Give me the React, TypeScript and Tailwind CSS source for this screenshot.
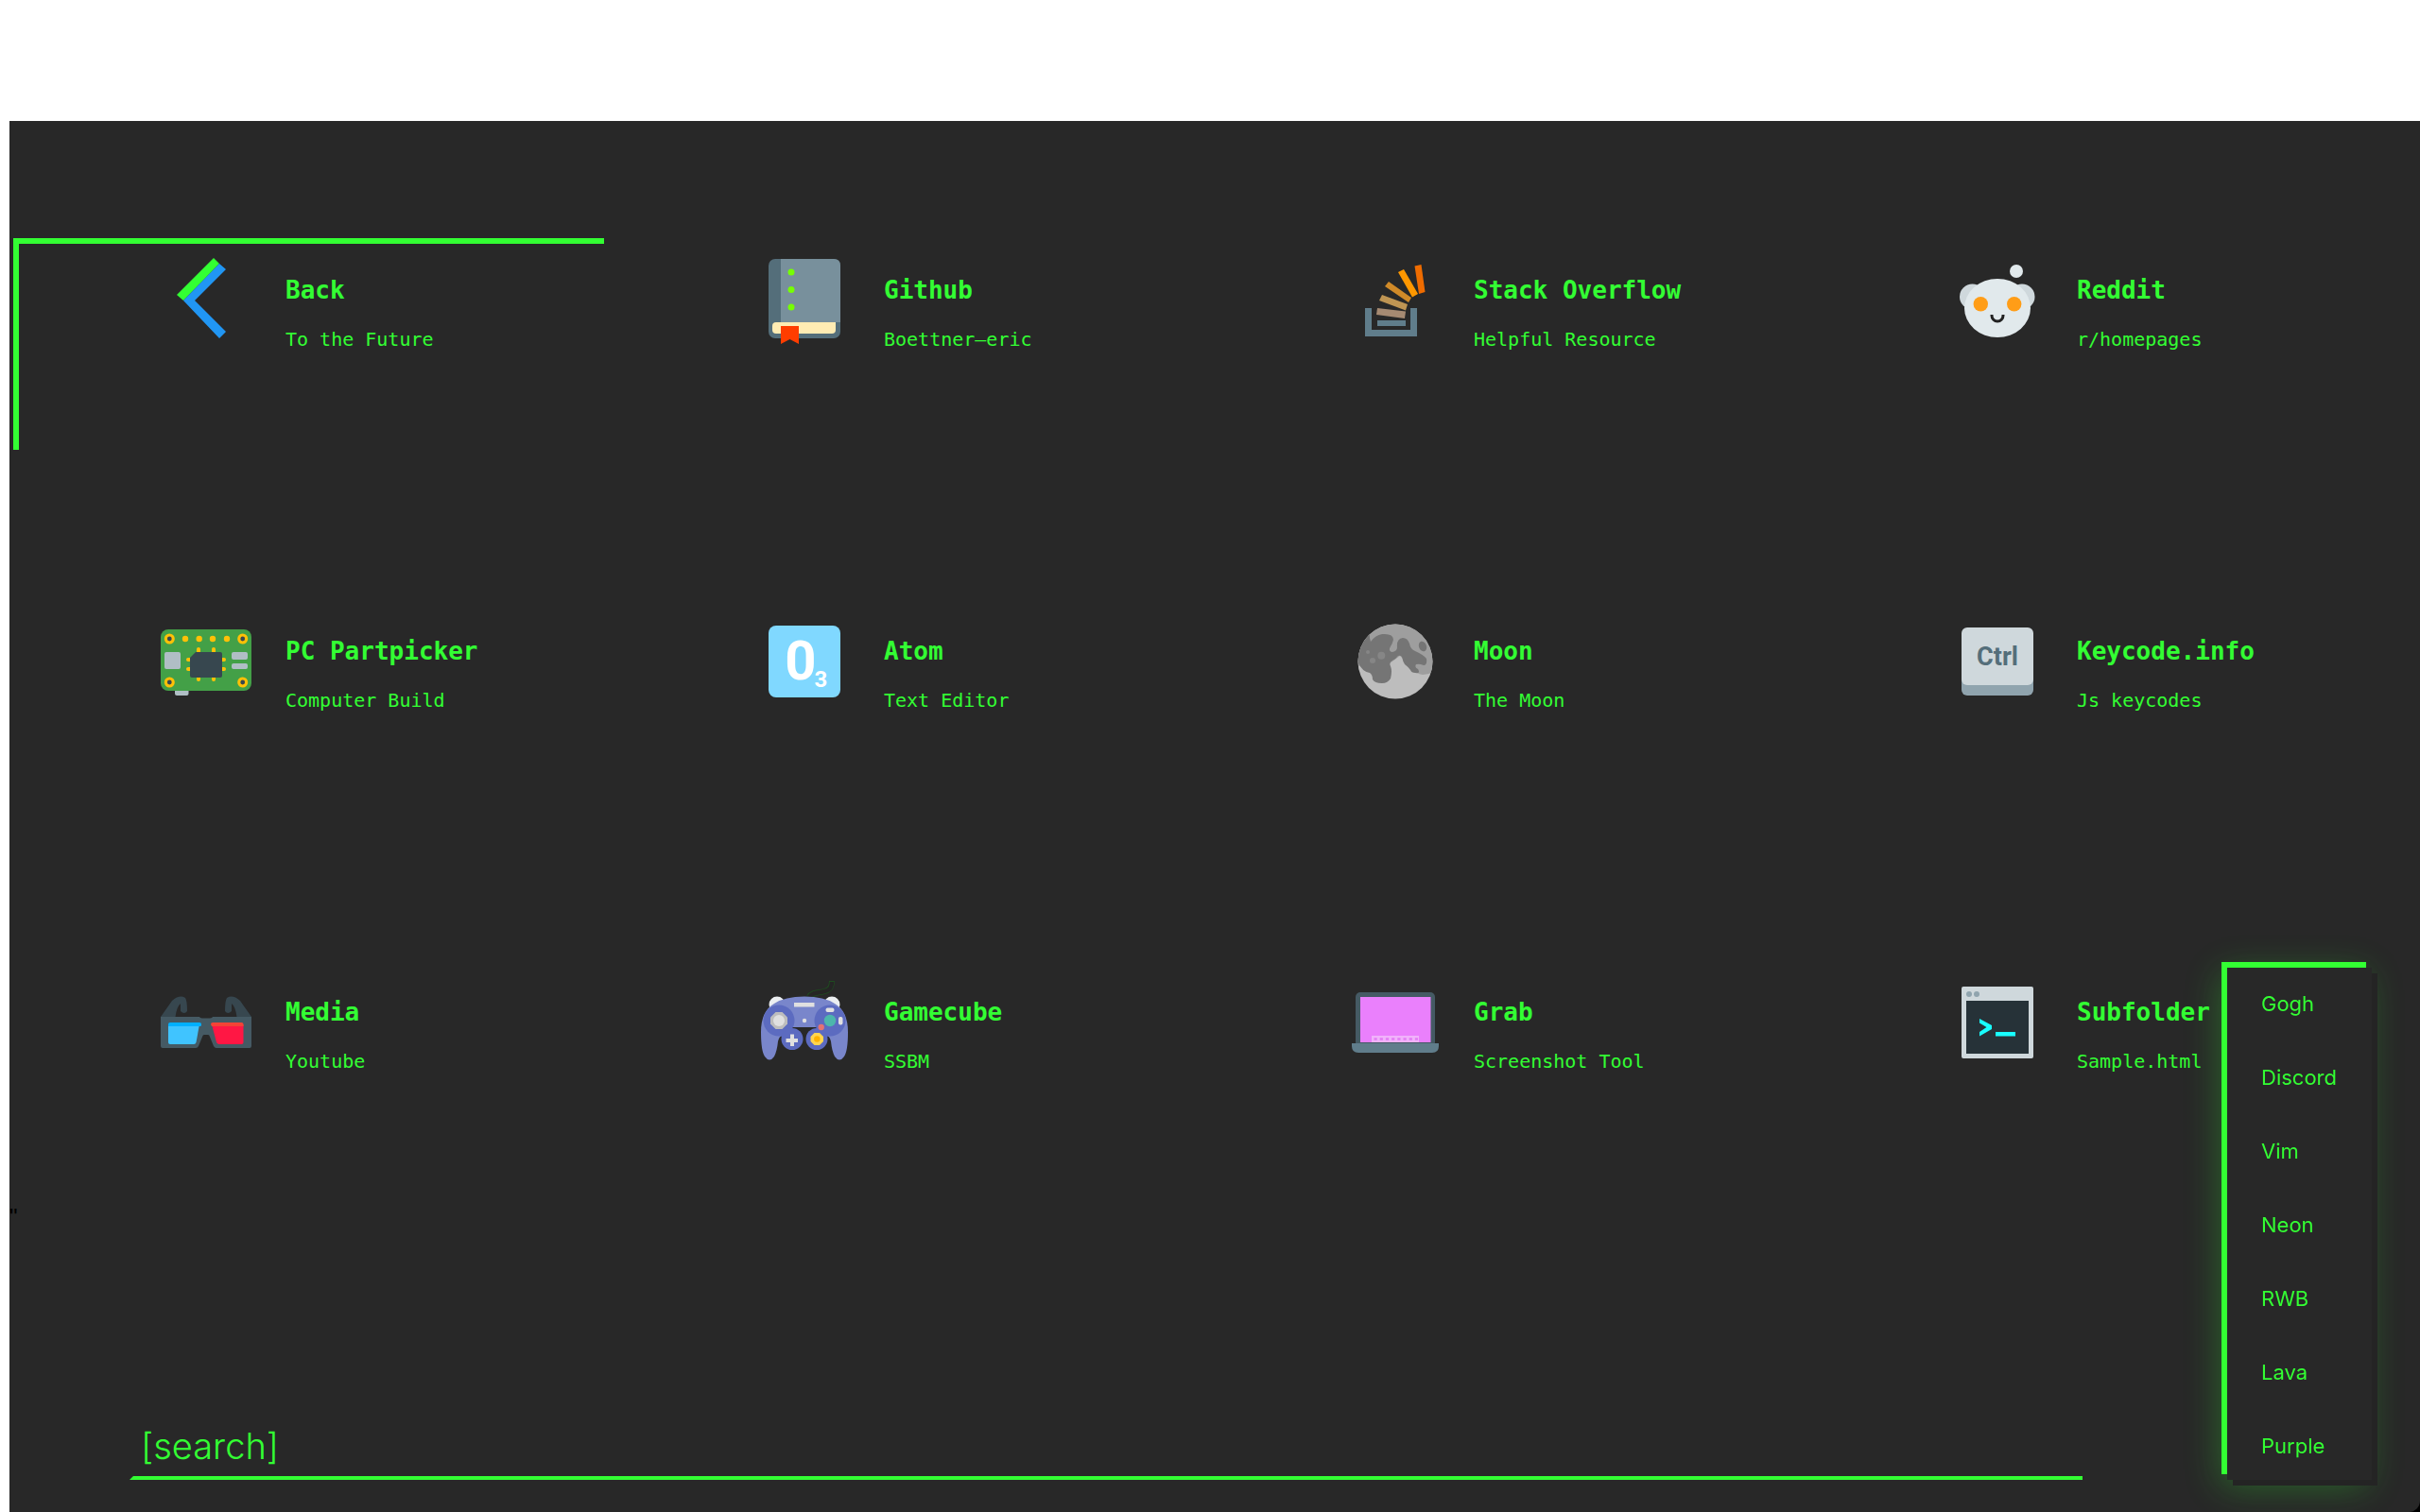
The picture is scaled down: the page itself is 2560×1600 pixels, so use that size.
import type { ReactNode } from "react";

function Icon({ children }: { children: ReactNode }) {
  return (
    <svg viewBox="0 0 96 96" className="size-24 shrink-0" aria-hidden="true">
      {children}
    </svg>
  );
}

const BackIcon = () => (
  <Icon>
    <path fill="#33ff33" d="M56 3 62 9 24 48 17 42z" />
    <path fill="#2196f3" d="M62 9 69 15 36 48 69 81 62 88 24 48z" />
  </Icon>
);

const BookIcon = () => (
  <Icon>
    <rect x="10" y="4" width="76" height="84" rx="7" fill="#546e7a" />
    <path fill="#78909c" d="M23 4H79Q86 4 86 11V71H23z" />
    <path fill="#ffecb3" d="M18 71H81V79Q81 83 77 83H18Q14 83 14 79V75Q14 71 18 71z" />
    <path fill="#ff3d00" d="M23 75H42V94L32.500 89 23 94z" />
    <g fill="#76ff03">
      <circle cx="34" cy="18" r="3.500" />
      <circle cx="34" cy="36.500" r="3.500" />
      <circle cx="34" cy="55" r="3.500" />
    </g>
  </Icon>
);

const StackIcon = () => (
  <Icon>
    <path fill="#607d8b" d="M17 56H24V79H65V56H72V86H17zM30 69H60V75H30z" />
    <path fill="#a68a72" d="M30 56 60 59.500 59 67 29 63z" />
    <path fill="#bf9553" d="M35 42 62 52 60 58.500 32 48z" />
    <path fill="#d08a28" d="M42 28 66 45 63 50 38 33z" />
    <path fill="#ff9800" d="M58 15 73 41 67 44.500 52 18z" />
    <path fill="#ef6c00" d="M76.500 10 80.500 39 74 41 69.500 11.500z" />
  </Icon>
);

const RedditIcon = () => (
  <Icon>
    <g fill="#cfd8dc">
      <circle cx="21.500" cy="44" r="13.500" />
      <circle cx="74" cy="44" r="13.500" />
    </g>
    <g fill="#e1e9ec">
      <ellipse cx="48" cy="56" rx="35" ry="31" />
      <circle cx="68" cy="17" r="7" />
    </g>
    <g fill="#ff9d17">
      <circle cx="30.300" cy="51.700" r="7.700" />
      <circle cx="65.700" cy="51.700" r="7.700" />
    </g>
    <path d="M42 63V64A6 6 0 0 0 54 64V63" fill="none" stroke="#212121" strokeWidth="3" />
  </Icon>
);

const BoardIcon = () => (
  <Icon>
    <rect x="15" y="74" width="14.500" height="10" rx="2" fill="#b0bec5" />
    <rect x="0" y="14" width="96" height="65" rx="8" fill="#43a047" />
    <g fill="#ffc107">
      <circle cx="9.300" cy="24" r="5.500" />
      <circle cx="86.700" cy="24" r="5.500" />
      <circle cx="9.300" cy="70" r="5.500" />
      <circle cx="86.700" cy="70" r="5.500" />
      <circle cx="26" cy="24" r="3.200" />
      <circle cx="40.700" cy="24" r="3.200" />
      <circle cx="55" cy="24" r="3.200" />
      <circle cx="70" cy="24" r="3.200" />
      <rect x="38" y="33" width="4" height="36" rx="2" />
      <rect x="54" y="33" width="4" height="36" rx="2" />
      <rect x="27" y="44" width="42" height="4" rx="2" />
      <rect x="27" y="54" width="42" height="4" rx="2" />
    </g>
    <g fill="#37474f">
      <circle cx="9.300" cy="24" r="2.400" />
      <circle cx="86.700" cy="24" r="2.400" />
      <circle cx="9.300" cy="70" r="2.400" />
      <circle cx="86.700" cy="70" r="2.400" />
      <path d="M37 38H63Q65 38 65 40V63Q65 65 63 65H33Q31 65 31 63V44z" />
    </g>
    <g fill="#b0bec5">
      <rect x="4" y="38" width="17" height="18" rx="2" />
      <rect x="75" y="38" width="17" height="8" rx="2" />
      <rect x="75" y="50" width="17" height="6" rx="2" />
    </g>
  </Icon>
);

const OzoneIcon = () => (
  <Icon>
    <rect x="10" y="10" width="76" height="76" rx="8" fill="#80d8ff" />
    <text x="44" y="66.500" textAnchor="middle" fill="#fff" className="font-['Roboto',sans-serif] text-[58px] font-bold">
      0
    </text>
    <text x="65.500" y="75" textAnchor="middle" fill="#fff" className="font-['Roboto',sans-serif] text-[24px] font-bold">
      3
    </text>
  </Icon>
);

const MoonIcon = () => (
  <Icon>
    <clipPath id="moon-disc">
      <circle cx="49" cy="48" r="39.500" />
    </clipPath>
    <g clipPath="url(#moon-disc)">
      <rect width="96" height="96" fill="#bdbdbd" />
      <path fill="#9e9e9e" d="M96 56Q86 62 78 62Q71 61 66 55L54 42 43 50 5 53V0H96z" />
      <path
        fill="#757575"
        d="M22 14Q21 22 23 27Q28 20 35 19Q47 18 47 25Q46 29 44 32Q41 37 46 38Q51 37 51 33Q50 24 57 23Q62 23 64 29Q65 35 70 37Q79 41 82 45Q83 52 79 52Q74 50 71 51Q69 54 73 56Q76 61 70 60Q66 60 65 57Q63 54 59 51Q57 48 56 43Q54 41 52 42Q49 46 46 47Q42 49 44 53Q46 58 44 66Q41 71 35 71Q27 71 25 67Q25 62 22 60Q14 59 9 48L0 46V14z"
      />
      <ellipse cx="78" cy="32" rx="4" ry="5.500" fill="#757575" transform="rotate(-20 78 32)" />
      <g fill="#868686">
        <circle cx="20" cy="38" r="2" />
        <circle cx="34.300" cy="41.700" r="4" />
        <circle cx="25" cy="47" r="3" />
      </g>
    </g>
  </Icon>
);

const KeyIcon = () => (
  <Icon>
    <rect x="10" y="50" width="76" height="34" rx="6" fill="#90a4ae" />
    <rect x="10" y="12" width="76" height="61" rx="6" fill="#cfd8dc" />
    <text x="48" y="52" textAnchor="middle" fill="#546e7a" className="font-['Roboto',sans-serif] text-[27px] font-bold">
      Ctrl
    </text>
  </Icon>
);

const GlassesIcon = () => (
  <Icon>
    <g fill="#37474f">
      <path d="M0 42 12 25Q20 18 26 22Q28 25 28 36Q25 40 21 36L21 28Q17 31 15.500 42z" />
      <path d="M96 42 84 25Q76 18 70 22Q68 25 68 36Q71 40 75 36L75 28Q79 31 80.500 42z" />
    </g>
    <path
      fill="#455a64"
      d="M0 42H41Q42 44 48 43.500Q54 44 55 42H96V73Q96 75 94 75H59Q57 75 56 73L51.500 62Q51 61 50 61H46Q45 61 44.500 62L40 73Q39 75 37 75H2Q0 75 0 73z"
    />
    <path fill="#40c4ff" d="M8 50 41 50 37.500 69Q37 71 35 71H10Q8 71 8 69z" />
    <path fill="#00b0ff" d="M10 48H41Q43 48 43 50L42.500 52H8V50Q8 48 10 48z" />
    <path fill="#ff1744" d="M54 50H87.500V69Q87.500 71 85.500 71H62Q60 71 59 69z" />
    <path fill="#f44336" d="M55 48H85.500Q87.500 48 87.500 50V52H54L53 50Q53 48 55 48z" />
  </Icon>
);

const GamepadIcon = () => (
  <Icon>
    <path d="M53 21C58 12 77 21 77 4" fill="none" stroke="#1f4d20" strokeWidth="6" />
    <path d="M53 21C58 12 77 21 77 5" fill="none" stroke="#252525" strokeWidth="4.500" />
    <g fill="#eceff1">
      <circle cx="19" cy="29" r="8.500" />
      <circle cx="77" cy="29" r="8.500" />
    </g>
    <path
      fill="#7986cb"
      d="M48 20.500Q69 20.500 80 28Q94 36 94 58Q94 78 90 84Q85 91 80 84Q77 78 76 68Q74 61 71 63L61 53H35L25 63Q22 61 20 68Q19 78 16 84Q11 91 6 84Q2 78 2 58Q2 36 16 28Q27 20.500 48 20.500z"
    />
    <g fill="#5c6bc0">
      <circle cx="21" cy="46" r="16.500" />
      <circle cx="75" cy="46" r="16.500" />
      <circle cx="35" cy="65.500" r="11.500" />
      <circle cx="61" cy="65.500" r="11.500" />
    </g>
    <path fill="#bdbdbd" d="M17.500 37H24.500L30 42.500V49.500L24.500 55H17.500L12 49.500V42.500z" />
    <circle cx="21" cy="46" r="6" fill="#e0e0e0" />
    <path fill="#e0e0e0" d="M33 60.500H37V65H41V69H37V73H33V69H28.500V65H33zM37 27H58.500V31.500H37z" />
    <circle cx="48" cy="46" r="2.200" fill="#e0e0e0" />
    <path fill="#ffd54f" d="M58.500 59H64L68 63V68L64 72H58.500L54.500 68V63z" />
    <circle cx="61.300" cy="65.500" r="3.200" fill="#ffb300" />
    <circle cx="75" cy="46" r="6.200" fill="#4db6ac" />
    <circle cx="65.700" cy="53" r="3.200" fill="#e57373" />
    <rect x="70.500" y="32.500" width="9" height="4.500" rx="2" fill="#e0e0e0" />
    <rect x="84" y="42" width="4.500" height="8.500" rx="2" fill="#e0e0e0" />
  </Icon>
);

const LaptopIcon = () => (
  <Icon>
    <rect x="7" y="16" width="84" height="58" rx="5" fill="#455a64" />
    <rect x="12" y="21" width="74.500" height="48" fill="#ea80fc" />
    <rect x="24" y="62" width="50" height="7" fill="#f1b2fb" />
    <path d="M26.500 65.500H73" stroke="#e37bf5" strokeWidth="2.600" strokeDasharray="3.200 3" />
    <path fill="#607d8b" d="M3 70H95V73Q95 80 88 80H10Q3 80 3 73z" />
  </Icon>
);

const ConsoleIcon = () => (
  <Icon>
    <rect x="10" y="10" width="76" height="76" rx="2" fill="#cfd8dc" />
    <rect x="15" y="25" width="66" height="56" fill="#263238" />
    <circle cx="18" cy="18" r="3" fill="#90a4ae" />
    <circle cx="26" cy="18" r="3" fill="#90a4ae" />
    <path fill="#18ffff" d="M29 44 42 51V55L29 62.500V58L36.500 53 29 48.500zM46 58H67V62.500H46z" />
  </Icon>
);

const links = [
  { title: "Back", note: "To the Future", icon: BackIcon },
  { title: "Github", note: "Boettner—eric", icon: BookIcon },
  { title: "Stack Overflow", note: "Helpful Resource", icon: StackIcon },
  { title: "Reddit", note: "r/homepages", icon: RedditIcon },
  { title: "PC Partpicker", note: "Computer Build", icon: BoardIcon },
  { title: "Atom", note: "Text Editor", icon: OzoneIcon },
  { title: "Moon", note: "The Moon", icon: MoonIcon },
  { title: "Keycode.info", note: "Js keycodes", icon: KeyIcon },
  { title: "Media", note: "Youtube", icon: GlassesIcon },
  { title: "Gamecube", note: "SSBM", icon: GamepadIcon },
  { title: "Grab", note: "Screenshot Tool", icon: LaptopIcon },
  { title: "Subfolder", note: "Sample.html", icon: ConsoleIcon },
];

const themes = ["Gogh", "Discord", "Vim", "Neon", "RWB", "Lava", "Purple"];

export default function App() {
  return (
    <div className="flex min-h-screen flex-col bg-white pt-32 pl-[10px]">
      <div className="flex grow flex-col bg-black">
        <main className="flex grow flex-col rounded-br-xl bg-[#282828] pt-[124px] text-[#33ff33]">
          <nav className="grid grid-cols-[633fr_624fr_638fr_655fr] gap-y-[158px] font-['DejaVu_Sans_Mono',monospace]">
            {links.map(({ title, note, icon: Glyph }, i) => (
              <a
                key={title}
                href="#"
                className={`mx-1 flex h-56 items-start gap-9 border-t-6 border-l-6 pt-3 pl-[150px] ${
                  i === 0 ? "border-[#33ff33]" : "border-transparent"
                }`}
              >
                <Glyph />
                <span className="flex flex-col gap-6 pt-[21px] whitespace-nowrap">
                  <span className="text-[26px] leading-8 font-bold">{title}</span>
                  <span className="text-xl leading-6">{note}</span>
                </span>
              </a>
            ))}
          </nav>
          <p className="mt-8 font-['Liberation_Sans',sans-serif] text-2xl text-black">"</p>
          <form className="mt-auto mb-[34px] ml-[127px] w-[81%]">
            <input
              type="text"
              aria-label="Search"
              placeholder="[search]"
              className="w-full border-4 border-r-0 border-transparent border-b-[#33ff33] px-2 pt-1 pb-[6px] font-['Inter',sans-serif] text-[38px] leading-[52px] font-light outline-none placeholder:text-[#33ff33] placeholder:opacity-100"
            />
          </form>
        </main>
      </div>
      <aside className="fixed right-[57px] bottom-10 flex w-[153px] flex-col items-start gap-12 border-t-6 border-l-6 border-[#33ff33] bg-[#282828] pt-[23px] pb-[15px] pl-9 font-['Inter',sans-serif] text-[22px] leading-[30px] text-[#33ff33] shadow-[6px_6px_0_#282828,12px_12px_0_#242424,0_12px_36px_rgba(51,255,51,0.3)]">
        {themes.map((theme) => (
          <button key={theme} type="button">
            {theme}
          </button>
        ))}
      </aside>
    </div>
  );
}
